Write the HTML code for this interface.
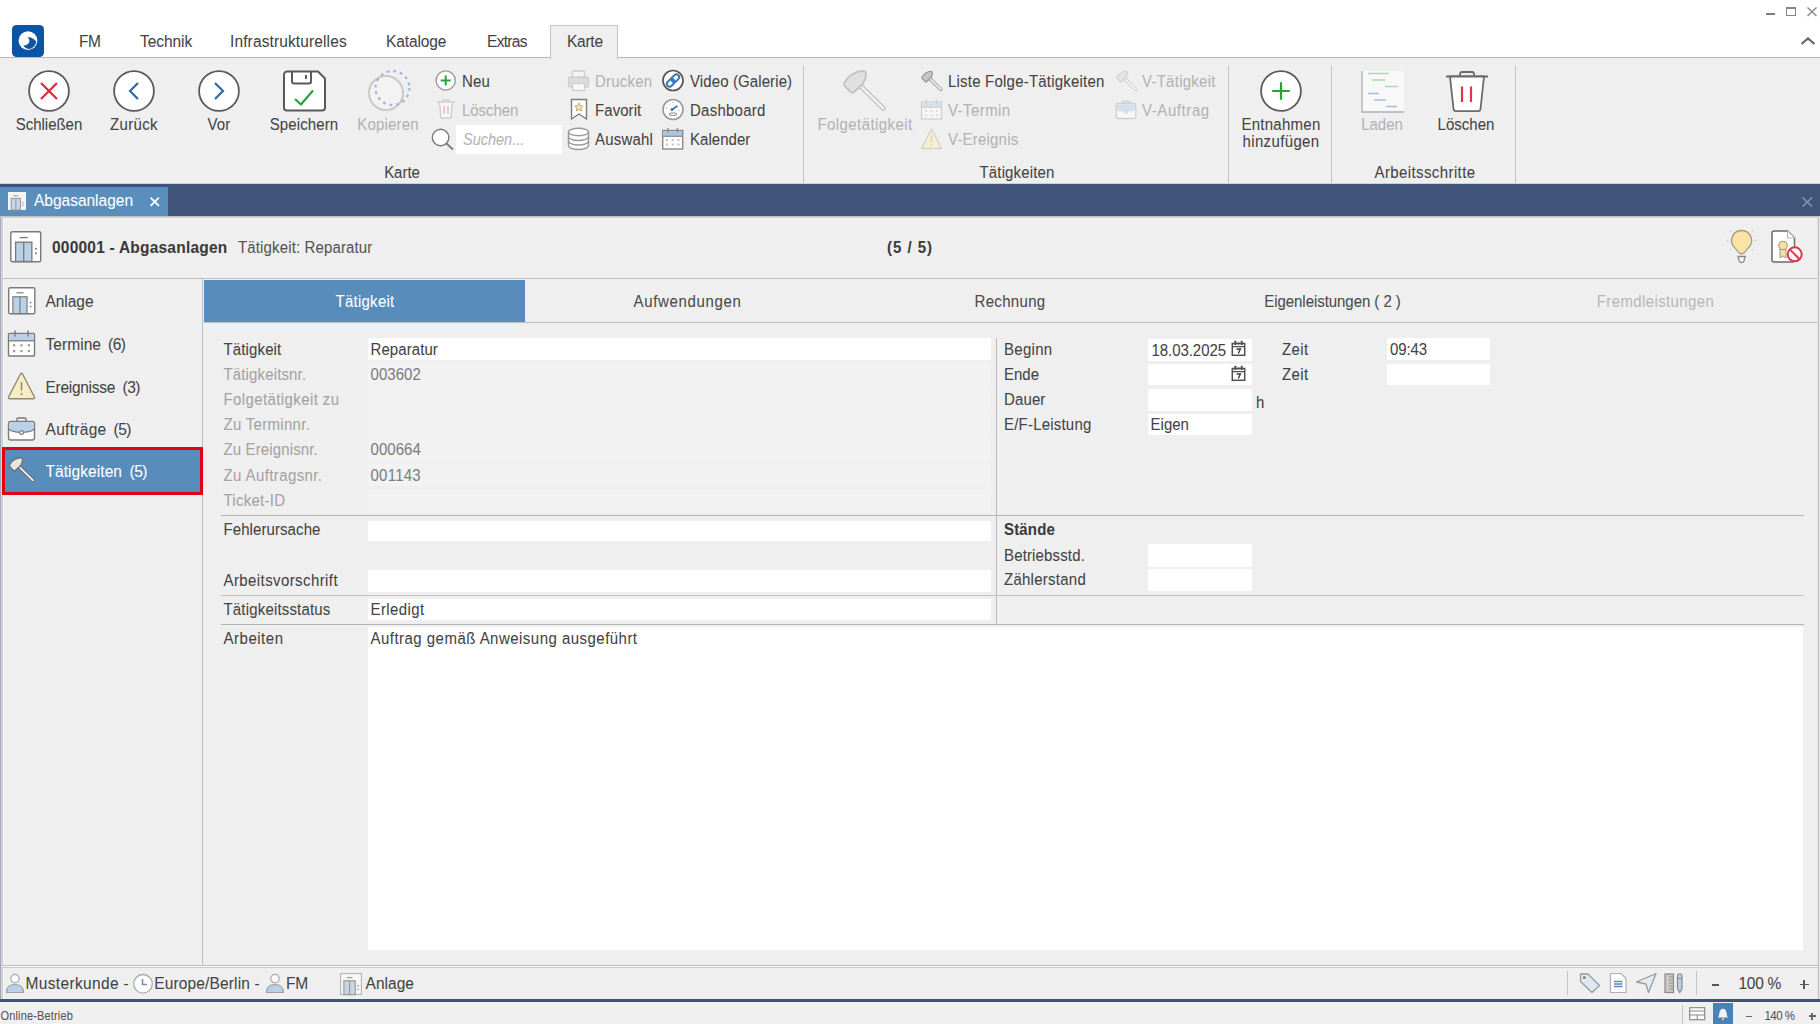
<!DOCTYPE html>
<html><head><meta charset="utf-8">
<style>
*{box-sizing:border-box;margin:0;padding:0}
html,body{width:1820px;height:1024px;overflow:hidden;background:#efefef}
body{font-family:"Liberation Sans",sans-serif;font-size:15px;color:#444;position:relative}
.a{position:absolute;white-space:nowrap}
.t{transform:scaleY(1.09);transform-origin:0 14.200px;position:absolute;white-space:nowrap;line-height:18px;height:18px;-webkit-text-stroke:0.06px currentColor}
.c{text-align:center}
.dis{color:#b3b3b3}
.lbl{color:#444}
.gl{color:#a3a3a3}
.w{background:#fff}
svg{position:absolute;overflow:visible}
.tb{font-size:15.5px;color:#444}
.big{transform:scaleY(1.09);transform-origin:0 14.200px;-webkit-text-stroke:0.06px currentColor;position:absolute;white-space:nowrap;line-height:18px;height:18px;width:120px;text-align:center}
.sb{font-size:15.500px;color:#444}
.tbt{font-size:15px;color:#4a4a4a}
.gv{color:#7d7d7d}
.st{font-size:15.500px;color:#444}
</style></head><body>
<!-- TOP WHITE -->
<div class="a w" style="left:0;top:0;width:1820px;height:57px"></div>
<div class="a" style="left:0;top:57px;width:1820px;height:1px;background:#b9b9b9"></div>
<!-- RIBBON BG -->
<div class="a" style="left:0;top:58px;width:1820px;height:126px;background:#efefef"></div>
<!-- BLUE BAR -->
<div class="a" style="left:0;top:183px;width:1820px;height:1px;background:#cdd1d8"></div>
<div class="a" style="left:0;top:184px;width:1820px;height:32px;background:#3f5478"></div>
<div class="a" style="left:0;top:186.500px;width:167.500px;height:29.500px;background:#5a8fbd"></div>
<!-- CONTENT FRAME -->
<div class="a" style="left:0;top:216px;width:1820px;height:784px;background:#efefef"></div>
<div class="a" style="left:0;top:216px;width:1px;height:784px;background:#a1a8b9"></div><div class="a" style="left:1px;top:216px;width:1px;height:784px;background:#d3d7db"></div><div class="a" style="left:2px;top:217px;width:1px;height:782px;background:#cdcfcb"></div><div class="a" style="left:3px;top:218px;width:1px;height:781px;background:#f5f6f0"></div>
<div class="a" style="left:1817px;top:217px;width:1px;height:782px;background:#e3e3e3"></div><div class="a" style="left:1818px;top:216px;width:1px;height:783px;background:#c4c4c4"></div><div class="a" style="left:1819px;top:216px;width:1px;height:783px;background:#e4e4e4"></div>
<div class="a" style="left:0;top:216px;width:1820px;height:1px;background:#c4c4c8"></div><div class="a" style="left:1px;top:217px;width:1818px;height:1px;background:#cfcfd2"></div><div class="a" style="left:3px;top:218px;width:1814px;height:1px;background:#f5f6f0"></div>
<!-- header line -->
<div class="a" style="left:3px;top:278px;width:1814px;height:1px;background:#bdbdbd"></div>
<!-- sidebar line -->
<div class="a" style="left:202px;top:279px;width:1px;height:685.500px;background:#bdbdbd"></div>
<!-- tabs -->
<div class="a" style="left:204px;top:280px;width:321px;height:42px;background:#588dbb"></div>
<div class="a" style="left:204px;top:322px;width:1613px;height:1px;background:#bdbdbd"></div>
<!-- status -->
<div class="a" style="left:2px;top:965px;width:1816px;height:1px;background:#bdbdbd"></div><div class="a" style="left:2px;top:966px;width:1816px;height:1px;background:#f8f8f8"></div><div class="a" style="left:2px;top:967px;width:1816px;height:1px;background:#c9c9c9"></div>
<div class="a" style="left:0;top:999.300px;width:1820px;height:2.500px;background:#3f5478;z-index:3"></div>

<!-- window controls -->
<div class="a" style="left:1766px;top:12.800px;width:9px;height:2px;background:#808080"></div>
<div class="a" style="left:1786px;top:7px;width:10px;height:9px;border:1px solid #858585;border-top:2.500px solid #858585"></div>
<svg style="left:1807px;top:6.800px" width="10" height="10"><path d="M0.5 0.5L9.5 9L9.5 9M9.5 0.5L0.5 9" stroke="#858585" stroke-width="1.3" fill="none"/></svg>
<svg style="left:1800px;top:36px" width="16" height="10"><path d="M1.5 8L8 2.5L14.5 8" stroke="#666" stroke-width="2.2" fill="none"/></svg>
<!-- logo -->
<div class="a" style="left:12px;top:24.500px;width:32px;height:32.500px;border-radius:4.500px;background:#0b55a4"></div>
<svg style="left:12px;top:25px" width="32" height="32"><circle cx="16" cy="15.700" r="9.400" fill="#fff"/><path d="M15.400 12.300C19 11.800 22 14 24.300 16.400A8.300 8.300 0 0 1 16.500 24C14 23.500 12.500 22 11.300 20.400C14.500 20.800 17.600 18.600 17.400 15.800C17.300 14 16.400 13 15.400 12.300Z" fill="#0b55a4"/></svg>
<!-- ribbon tabs -->
<div class="a" style="left:550px;top:25px;width:68px;height:34px;background:#efefef;border:1px solid #c4c4c4;border-bottom:none"></div>
<div class="t tb" style="letter-spacing:-0.445px;left:79px;top:33px">FM</div>
<div class="t tb" style="letter-spacing:-0.066px;left:140px;top:33px">Technik</div>
<div class="t tb" style="letter-spacing:0.123px;left:230px;top:33px">Infrastrukturelles</div>
<div class="t tb" style="letter-spacing:-0.100px;left:386px;top:33px">Kataloge</div>
<div class="t tb" style="letter-spacing:-0.690px;left:487px;top:33px">Extras</div>
<div class="t tb" style="letter-spacing:-0.253px;left:567px;top:33px">Karte</div>
<!--TOPROW-->

<!-- big buttons -->
<svg style="left:27px;top:69.200px" width="44" height="44"><circle cx="22" cy="22" r="19.900" fill="#fff" stroke="#5a5a5a" stroke-width="1.800"/><path d="M14 14L30 30M30 14L14 30" stroke="#e0283c" stroke-width="2.200" fill="none"/></svg>
<svg style="left:112px;top:69.200px" width="44" height="44"><circle cx="22" cy="22" r="19.900" fill="#fff" stroke="#5a5a5a" stroke-width="1.800"/><path d="M26 14L18 22L26 30" stroke="#2c6aa8" stroke-width="2.200" fill="none"/></svg>
<svg style="left:197px;top:69.200px" width="44" height="44"><circle cx="22" cy="22" r="19.900" fill="#fff" stroke="#5a5a5a" stroke-width="1.800"/><path d="M18 14L26 22L18 30" stroke="#2c6aa8" stroke-width="2.200" fill="none"/></svg>
<div class="big" style="letter-spacing:-0.023px;left:-11px;top:116px">Schließen</div>
<div class="big" style="letter-spacing:0.326px;left:74px;top:116px">Zurück</div>
<div class="big" style="letter-spacing:0.228px;left:159px;top:116px">Vor</div>
<div class="big" style="letter-spacing:0.106px;left:244px;top:116px">Speichern</div>
<div class="big dis" style="letter-spacing:0.157px;left:328px;top:116px">Kopieren</div>
<div class="big" style="letter-spacing:-0.032px;left:342px;top:164px">Karte</div>
<!-- group separators -->
<div class="a" style="left:803.300px;top:66px;width:1px;height:117px;background:#c3c3c3"></div>
<div class="a" style="left:1227.600px;top:66px;width:1px;height:117px;background:#c3c3c3"></div>
<div class="a" style="left:1330.700px;top:66px;width:1px;height:117px;background:#c3c3c3"></div>
<div class="a" style="left:1515.400px;top:66px;width:1px;height:117px;background:#c3c3c3"></div>

<!-- Speichern icon -->
<svg style="left:282px;top:69px" width="46" height="44"><path d="M5 2.500H36L43 9.500V38.500a3 3 0 0 1-3 3H5a3 3 0 0 1-3-3V5.500a3 3 0 0 1 3-3z" fill="#fff" stroke="#5a5a5a" stroke-width="2"/><path d="M10 2.500V12.500a2 2 0 0 0 2 2H27a2 2 0 0 0 2-2V2.500" fill="none" stroke="#5a5a5a" stroke-width="2"/><path d="M24 6V10" stroke="#5a5a5a" stroke-width="2"/><path d="M13 30L19 35.500L31 21.500" fill="none" stroke="#27a237" stroke-width="2.200"/></svg>
<!-- Kopieren icon -->
<svg style="left:366px;top:68px" width="48" height="46"><circle cx="20" cy="25" r="17" fill="#f3f3f3" stroke="#c9c9c9" stroke-width="2"/><circle cx="26.500" cy="20" r="17" fill="none" stroke="#a3bad4" stroke-width="2.300" stroke-dasharray="2.800 3.900"/></svg>
<!-- small col 1 -->
<svg style="left:435px;top:70px" width="22" height="22"><circle cx="10.700" cy="10.500" r="9.600" fill="#fff" stroke="#9b9b9b" stroke-width="1.400"/><path d="M10.700 5.500V15.500M5.700 10.500H15.700" stroke="#2ea043" stroke-width="2"/></svg>
<div class="t" style="letter-spacing:0.190px;left:462px;top:72.6px">Neu</div>
<svg style="left:436px;top:97.700px" width="20" height="22"><path d="M1 4H19M7 4V2H13V4M3.500 4L5 20H15L16.500 4" fill="#f7f7f7" stroke="#cfcfcf" stroke-width="1.400"/><path d="M8 8V16M12 8V16" stroke="#f0b8bd" stroke-width="1.500"/></svg>
<div class="t dis" style="letter-spacing:-0.060px;left:462px;top:102.2px">Löschen</div>
<svg style="left:430px;top:127px" width="26" height="26"><circle cx="10.600" cy="10.500" r="8.300" fill="#fff" stroke="#7a7a7a" stroke-width="1.400"/><path d="M16.500 16.500L23 22.500" stroke="#7a7a7a" stroke-width="1.800"/></svg>
<div class="a w" style="left:456px;top:125px;width:106px;height:29px"></div>
<div class="t" style="left:463px;top:130.8px;font-style:italic;color:#b4b4b4;font-size:14.500px">Suchen...</div>
<!-- small col 2 -->
<svg style="left:567px;top:69px" width="24" height="24"><path d="M5.500 8V2H17.500V8" fill="#f4f4f4" stroke="#cdcdcd" stroke-width="1.300"/><rect x="1.500" y="8" width="20" height="10" rx="1.500" fill="#dcdcdc" stroke="#cdcdcd" stroke-width="1.300"/><rect x="5.500" y="14.500" width="12" height="7" fill="#f7f7f7" stroke="#cdcdcd" stroke-width="1.300"/></svg>
<div class="t dis" style="letter-spacing:0.206px;left:595px;top:72.6px">Drucken</div>
<svg style="left:570px;top:98px" width="18" height="23"><path d="M1.500 1.500H16.500V21L9 16L1.500 21Z" fill="#fff" stroke="#7d7d7d" stroke-width="1.400"/><path d="M9 5l1.300 2.700l2.900 0.400l-2.100 2l0.500 2.900L9 11.600L6.400 13l0.500-2.900l-2.100-2l2.900-0.400z" fill="#f5e2a6" stroke="#b9a377" stroke-width="0.900"/></svg>
<div class="t" style="letter-spacing:0.065px;left:595px;top:102.2px">Favorit</div>
<svg style="left:567px;top:127px" width="24" height="24"><path d="M1.500 5V18.500C1.500 20.700 6 22.500 11.500 22.500S21.500 20.700 21.500 18.500V5" fill="#fff" stroke="#9a9a9a" stroke-width="1.400"/><ellipse cx="11.500" cy="5" rx="10" ry="3.700" fill="#fff" stroke="#9a9a9a" stroke-width="1.400"/><path d="M1.500 9.500C1.500 11.700 6 13.500 11.500 13.500S21.500 11.700 21.500 9.500M1.500 14C1.500 16.200 6 18 11.500 18S21.500 16.200 21.500 14" fill="none" stroke="#9a9a9a" stroke-width="1.400"/></svg>
<div class="t" style="letter-spacing:0.185px;left:595px;top:130.8px">Auswahl</div>
<!-- small col 3 -->
<svg style="left:662px;top:69px" width="24" height="24"><circle cx="11" cy="11.500" r="10" fill="#fff" stroke="#555" stroke-width="1.700"/><g transform="rotate(-45 11 11.500)" fill="none" stroke="#3a78b8" stroke-width="2"><rect x="3.500" y="8.700" width="8.500" height="5.600" rx="2.800"/><rect x="10" y="8.700" width="8.500" height="5.600" rx="2.800"/></g></svg>
<div class="t" style="letter-spacing:0.106px;left:690px;top:72.6px">Video (Galerie)</div>
<svg style="left:662px;top:98px" width="24" height="24"><circle cx="11" cy="11.500" r="10" fill="#fff" stroke="#9a9a9a" stroke-width="1.600"/><path d="M10 11.500L15.500 8" stroke="#3a78b8" stroke-width="2"/><circle cx="10" cy="11.500" r="1.500" fill="#3a78b8"/><ellipse cx="11" cy="16.200" rx="3.600" ry="1.300" fill="none" stroke="#9a9a9a" stroke-width="1.100"/><path d="M4 9.500l1.200 0.500M6.500 5.800l0.800 0.900M11 4v1.200M17.500 12.500h-1.200" stroke="#b5b5b5" stroke-width="1"/></svg>
<div class="t" style="letter-spacing:0.245px;left:690px;top:102.2px">Dashboard</div>
<svg style="left:661px;top:127px" width="24" height="24"><rect x="1.700" y="3.500" width="20" height="18.500" fill="#fff" stroke="#8a8a8a" stroke-width="1.400"/><rect x="2.400" y="4.200" width="18.600" height="4.800" fill="#a9c5e0"/><path d="M1.700 9.300H21.700" stroke="#8a8a8a" stroke-width="1.200"/><path d="M7 1V5.500M16.500 1V5.500" stroke="#8a8a8a" stroke-width="1.400"/><g fill="#bdbdbd"><rect x="5" y="12" width="2" height="2"/><rect x="10.700" y="12" width="2" height="2"/><rect x="16.400" y="12" width="2" height="2"/><rect x="5" y="16.500" width="2" height="2"/><rect x="10.700" y="16.500" width="2" height="2"/><rect x="16.400" y="16.500" width="2" height="2"/></g></svg>
<div class="t" style="letter-spacing:0.044px;left:690px;top:130.8px">Kalender</div>
<!-- Folgetätigkeit -->
<svg style="left:840px;top:68px" width="48" height="44"><g transform="scale(1)"><path d="M21 18.500L43.500 40.500" stroke="#c2c2c2" stroke-width="4.8" stroke-linecap="round"/><path d="M21 18.500L43.500 40.500" stroke="#f5f5f5" stroke-width="2.3" stroke-linecap="round"/><path d="M4.500 14.500C6.500 11 9 8 12.300 6.200C15.500 4.200 19 3 22.800 3C25 3 26.200 4.300 26 6.200C25.700 9.500 24.800 12.500 23.200 15.500L14 24Q12.300 25.500 10.800 24L4.300 17.500Q3.300 16.200 4.500 14.500Z" fill="#e0e0e0" stroke="#c2c2c2" stroke-width="1.8" stroke-linejoin="round"/></g></svg>
<div class="big dis" style="letter-spacing:0.427px;left:805px;top:116px">Folgetätigkeit</div>
<!-- Tätigkeiten small -->
<svg style="left:919.7px;top:70px" width="23" height="21"><g transform="scale(0.48)"><path d="M21 18.500L43.500 40.500" stroke="#a6a6a6" stroke-width="7.500000000000001" stroke-linecap="round"/><path d="M21 18.500L43.500 40.500" stroke="#eeeeee" stroke-width="3.3333333333333335" stroke-linecap="round"/><path d="M4.500 14.500C6.500 11 9 8 12.300 6.200C15.500 4.200 19 3 22.800 3C25 3 26.200 4.300 26 6.200C25.700 9.500 24.800 12.500 23.200 15.500L14 24Q12.300 25.500 10.800 24L4.300 17.500Q3.300 16.200 4.500 14.500Z" fill="#c6c6c6" stroke="#9a9a9a" stroke-width="2.7083333333333335" stroke-linejoin="round"/></g></svg>
<div class="t" style="letter-spacing:0.211px;left:948px;top:72.6px">Liste Folge-Tätigkeiten</div>
<svg style="left:920px;top:98px" width="24" height="24"><rect x="1.500" y="4" width="20" height="17" fill="#f6f6f6" stroke="#cfcfcf" stroke-width="1.300"/><rect x="2.200" y="4.700" width="18.600" height="4.300" fill="#d4e0ec"/><path d="M1.500 9.300H21.500" stroke="#cfcfcf" stroke-width="1.100"/><path d="M6.500 1.500V6M16.500 1.500V6" stroke="#cfcfcf" stroke-width="1.300"/><g fill="#dcdcdc"><rect x="5" y="12" width="2" height="2"/><rect x="10.500" y="12" width="2" height="2"/><rect x="16" y="12" width="2" height="2"/><rect x="5" y="16.300" width="2" height="2"/><rect x="10.500" y="16.300" width="2" height="2"/><rect x="16" y="16.300" width="2" height="2"/></g></svg>
<div class="t dis" style="letter-spacing:0.427px;left:948px;top:102.2px">V-Termin</div>
<svg style="left:920px;top:127px" width="24" height="24"><path d="M11.500 2L21.500 21.500H1.500Z" fill="#f6efd2" stroke="#d4d1c6" stroke-width="1.300" stroke-linejoin="round"/><path d="M11.500 8.500V15" stroke="#d4d1c6" stroke-width="1.300"/><circle cx="11.500" cy="18" r="0.900" fill="#d4d1c6"/></svg>
<div class="t dis" style="letter-spacing:0.203px;left:948px;top:130.8px">V-Ereignis</div>
<svg style="left:1114.7px;top:70px" width="23" height="21"><g transform="scale(0.48)"><path d="M21 18.500L43.500 40.500" stroke="#d2d2d2" stroke-width="7.500000000000001" stroke-linecap="round"/><path d="M21 18.500L43.500 40.500" stroke="#f3f3f3" stroke-width="3.3333333333333335" stroke-linecap="round"/><path d="M4.500 14.500C6.500 11 9 8 12.300 6.200C15.500 4.200 19 3 22.800 3C25 3 26.200 4.300 26 6.200C25.700 9.500 24.800 12.500 23.200 15.500L14 24Q12.300 25.500 10.800 24L4.300 17.500Q3.300 16.200 4.500 14.500Z" fill="#e4e4e4" stroke="#d2d2d2" stroke-width="2.7083333333333335" stroke-linejoin="round"/></g></svg>
<div class="t dis" style="letter-spacing:0.257px;left:1142px;top:72.6px">V-Tätigkeit</div>
<svg style="left:1115px;top:99px" width="24" height="22"><path d="M7.500 4.500V2.500H14.500V4.500" fill="none" stroke="#cfcfcf" stroke-width="1.300"/><rect x="1.200" y="4.500" width="19.600" height="15" rx="1.800" fill="#f7f7f7" stroke="#cfcfcf" stroke-width="1.300"/><path d="M1.800 5.200H20.200V10C20.200 12 15 13 11 13S1.800 12 1.800 10Z" fill="#d4e0ec"/><circle cx="11" cy="13" r="1.500" fill="#f7f7f7" stroke="#cfcfcf" stroke-width="1"/></svg>
<div class="t dis" style="letter-spacing:0.584px;left:1142px;top:102.2px">V-Auftrag</div>
<div class="big" style="letter-spacing:0.139px;left:957px;top:164px">Tätigkeiten</div>
<!-- Entnahmen -->
<svg style="left:1259px;top:69.200px" width="44" height="44"><circle cx="22" cy="22" r="19.900" fill="#fff" stroke="#5a5a5a" stroke-width="1.800"/><path d="M22 13.200V30.800M13.200 22H30.800" stroke="#27a237" stroke-width="2.200"/></svg>
<div class="big" style="letter-spacing:0.263px;left:1221px;top:115.500px">Entnahmen</div><div class="big" style="letter-spacing:0.359px;left:1221px;top:132.800px">hinzufügen</div>
<!-- Laden -->
<svg style="left:1359.600px;top:69.600px" width="46" height="44"><rect x="2" y="1" width="42" height="41" fill="#f8f8f8"/><path d="M2 1V42H44" fill="none" stroke="#b0b0b0" stroke-width="1.300"/><path d="M8 3.500H29M12 10H25M25 16.500H38" stroke="#a6dcae" stroke-width="1.600"/><path d="M8 23.500H19M14 30H26M26 36.500H37" stroke="#a3bfdc" stroke-width="1.600"/></svg>
<div class="big dis" style="letter-spacing:-0.004px;left:1322px;top:116px">Laden</div>
<!-- Löschen big -->
<svg style="left:1444px;top:70px" width="46" height="44"><path d="M2 6.500H44" stroke="#6a6a6a" stroke-width="2"/><path d="M16 6.500V4a2 2 0 0 1 2-2H28a2 2 0 0 1 2 2V6.500" fill="none" stroke="#6a6a6a" stroke-width="1.800"/><path d="M6 6.500L9.500 39a2.500 2.500 0 0 0 2.500 2.200H34a2.500 2.500 0 0 0 2.500-2.200L40 6.500Z" fill="#fff" stroke="#6a6a6a" stroke-width="1.800"/><path d="M18 16.500V32M27 16.500V32" stroke="#e5334a" stroke-width="2.200"/></svg>
<div class="big" style="letter-spacing:0.026px;left:1406px;top:116px">Löschen</div>
<div class="big" style="letter-spacing:0.397px;left:1365px;top:164px">Arbeitsschritte</div>
<!--RIBBON-->

<svg style="left:7.500px;top:192px" width="18" height="18" viewBox="0 0 31 31"><rect x="0" y="0" width="31" height="31" fill="#f4f4f4"/><path d="M9.500 6.500H17.500" stroke="#9a9a9a" stroke-width="1.800"/><rect x="5.500" y="11" width="16" height="20" fill="#c6d6e6" stroke="#9a9a9a" stroke-width="1.800"/><path d="M13.500 11V31" stroke="#9a9a9a" stroke-width="1.800"/><circle cx="25.500" cy="18" r="1.300" fill="#9a9a9a"/><circle cx="25.500" cy="23" r="1.300" fill="#9a9a9a"/></svg>
<div class="t" style="letter-spacing:-0.010px;left:34px;top:192px;color:#fff;font-size:15.500px">Abgasanlagen</div>
<svg style="left:150px;top:196.700px" width="10" height="10"><path d="M0.600 0.600L8.900 8.900M8.900 0.600L0.600 8.900" stroke="#fff" stroke-width="1.800"/></svg>
<svg style="left:1801.500px;top:196.500px" width="11" height="10"><path d="M0.500 0.500L10 9.500M10 0.500L0.500 9.500" stroke="#8a97b0" stroke-width="1.500"/></svg>
<!--BLUEBAR-->
<svg style="left:10px;top:230.5px" width="31.5" height="31.5" viewBox="0 0 31 31"><rect x="0.800" y="0.800" width="29.400" height="29.400" rx="1.500" fill="#fff" stroke="#7a7a7a" stroke-width="1.4"/><path d="M9.500 6.500H17.500" stroke="#7a7a7a" stroke-width="1.300"/><rect x="5.500" y="11" width="16" height="19" fill="#b9d0e6" stroke="#7a7a7a" stroke-width="1.300"/><path d="M13.500 11V30" stroke="#7a7a7a" stroke-width="1.300"/><circle cx="25.500" cy="17.500" r="1" fill="#7a7a7a"/><circle cx="25.500" cy="22" r="1" fill="#7a7a7a"/></svg>
<div class="t" style="letter-spacing:0.220px;left:52px;top:239px;font-weight:bold;color:#3a3a3a;font-size:15.500px">000001 - Abgasanlagen</div>
<div class="t" style="letter-spacing:0.138px;left:238px;top:239px;color:#555">Tätigkeit: Reparatur</div>
<div class="t" style="letter-spacing:0.973px;left:887px;top:239px;font-weight:bold;color:#3a3a3a">(5 / 5)</div>
<!-- bulb -->
<svg style="left:1726px;top:228px" width="32" height="37"><path d="M15.600 2.500a10 10 0 0 1 6.500 17.600c-1.800 1.700-2.800 2.900-3.300 4.300l-3.200 1.600l-3.200-1.600c-0.500-1.400-1.500-2.600-3.300-4.300a10 10 0 0 1 6.500-17.600z" fill="#fbe3a8" stroke="#a89880" stroke-width="1.300"/><path d="M12 28.500h7.200l-1.200 4.500a2.600 2.600 0 0 1-4.800 0z" fill="#f4f4f4" stroke="#8a8a8a" stroke-width="1.300"/><g fill="#c9c9c9"><circle cx="1.700" cy="12.500" r="0.900"/><circle cx="29.500" cy="12.500" r="0.900"/><circle cx="4.800" cy="3.300" r="0.800"/><circle cx="26.400" cy="3.300" r="0.800"/><circle cx="4.800" cy="21.700" r="0.800"/><circle cx="26.400" cy="21.700" r="0.800"/></g></svg>
<!-- doc -->
<svg style="left:1770px;top:229px" width="36" height="36"><path d="M4 2H17.500L24.500 9V31a2 2 0 0 1-2 2H4a2 2 0 0 1-2-2V4a2 2 0 0 1 2-2z" fill="#fff" stroke="#6a6a6a" stroke-width="1.500"/><path d="M17.500 2V9H24.500" fill="#fff" stroke="#b5b5b5" stroke-width="1.200"/><path d="M10 20v9l3-2l3 2v-9z" fill="#f5dfa5" stroke="#a89880" stroke-width="1"/><circle cx="13" cy="16.500" r="4.300" fill="#f5dfa5" stroke="#a89880" stroke-width="1.100"/><circle cx="24.700" cy="25.300" r="7" fill="#fff" stroke="#e0344a" stroke-width="2"/><path d="M19.800 20.400L29.600 30.200" stroke="#e0344a" stroke-width="2"/></svg>
<!--HEADER-->
<svg style="left:8px;top:287px" width="27.5" height="27.5" viewBox="0 0 31 31"><rect x="0.800" y="0.800" width="29.400" height="29.400" rx="1.500" fill="#fff" stroke="#7a7a7a" stroke-width="1.5781818181818181"/><path d="M9.500 6.500H17.500" stroke="#7a7a7a" stroke-width="1.300"/><rect x="5.500" y="11" width="16" height="19" fill="#b9d0e6" stroke="#7a7a7a" stroke-width="1.300"/><path d="M13.500 11V30" stroke="#7a7a7a" stroke-width="1.300"/><circle cx="25.500" cy="17.500" r="1" fill="#7a7a7a"/><circle cx="25.500" cy="22" r="1" fill="#7a7a7a"/></svg>
<div class="t sb" style="letter-spacing:-0.044px;left:45.500px;top:293px">Anlage</div>
<svg style="left:7px;top:329px" width="30" height="29"><rect x="1.500" y="4.500" width="26" height="22.500" rx="1" fill="#fff" stroke="#7a7a7a" stroke-width="1.400"/><rect x="2.200" y="5.200" width="24.600" height="6.300" fill="#b9d0e6"/><path d="M1.500 11.800H27.500" stroke="#7a7a7a" stroke-width="1.300"/><path d="M8 1.500V7.500M21 1.500V7.500" stroke="#7a7a7a" stroke-width="1.400"/><g fill="#9a9a9a"><rect x="6" y="15.200" width="2.200" height="2.200"/><rect x="13.400" y="15.200" width="2.200" height="2.200"/><rect x="20.800" y="15.200" width="2.200" height="2.200"/><rect x="6" y="21" width="2.200" height="2.200"/><rect x="13.400" y="21" width="2.200" height="2.200"/><rect x="20.800" y="21" width="2.200" height="2.200"/></g></svg>
<div class="t sb" style="letter-spacing:0.051px;left:45.500px;top:335.500px">Termine</div><div class="t sb" style="letter-spacing:-0.484px;left:108px;top:335.500px">(6)</div>
<svg style="left:7px;top:371px" width="30" height="30"><path d="M13.300 3.300Q14.500 1.200 15.700 3.300L27.300 25.700Q28.200 27.700 26.200 27.700H2.800Q0.800 27.700 1.700 25.700Z" fill="#f7ecc4" stroke="#8e8a7d" stroke-width="1.400" stroke-linejoin="round"/><path d="M14.500 11V19.500" stroke="#8e8a7d" stroke-width="1.500"/><circle cx="14.500" cy="23" r="1.100" fill="#8e8a7d"/></svg>
<div class="t sb" style="letter-spacing:-0.287px;left:45.500px;top:378.500px">Ereignisse</div><div class="t sb" style="letter-spacing:-0.484px;left:122.500px;top:378.500px">(3)</div>
<svg style="left:7px;top:416px" width="30" height="26"><path d="M10 5.500V3a1 1 0 0 1 1-1H18a1 1 0 0 1 1 1V5.500" fill="none" stroke="#7a7a7a" stroke-width="1.400"/><rect x="1.500" y="5.500" width="26" height="18.500" rx="2.300" fill="#fff" stroke="#7a7a7a" stroke-width="1.400"/><path d="M2.200 6.200H26.800V12.500C26.800 15 20 16.500 14.500 16.500S2.200 15 2.200 12.500Z" fill="#b9d0e6"/><path d="M2 12.500C2 15 9 16.500 14.500 16.500S27 15 27 12.500" fill="none" stroke="#7a7a7a" stroke-width="1.200"/><circle cx="14.500" cy="16.500" r="1.900" fill="#fff" stroke="#7a7a7a" stroke-width="1.200"/></svg>
<div class="t sb" style="letter-spacing:0.299px;left:45.500px;top:420.500px">Aufträge</div><div class="t sb" style="letter-spacing:-0.484px;left:113.500px;top:420.500px">(5)</div>
<div class="a" style="left:2px;top:447.300px;width:200.500px;height:47.700px;background:#588dbb;border:3px solid #e5000f"></div>
<svg style="left:6.8px;top:456.1px" width="29" height="26"><g transform="scale(0.6)"><path d="M21 18.500L43.500 40.500" stroke="#6a6a6a" stroke-width="6.0" stroke-linecap="round"/><path d="M21 18.500L43.500 40.500" stroke="#f6f4ef" stroke-width="2.8333333333333335" stroke-linecap="round"/><path d="M4.500 14.500C6.500 11 9 8 12.300 6.200C15.500 4.200 19 3 22.800 3C25 3 26.200 4.300 26 6.200C25.700 9.500 24.800 12.500 23.200 15.500L14 24Q12.300 25.500 10.800 24L4.300 17.500Q3.300 16.200 4.500 14.500Z" fill="#e6e6e6" stroke="#6f6f6f" stroke-width="2.3333333333333335" stroke-linejoin="round"/></g></svg>
<div class="t sb" style="letter-spacing:0.061px;left:45.500px;top:462.500px;color:#fff">Tätigkeiten</div><div class="t sb" style="letter-spacing:-0.484px;left:129.500px;top:462.500px;color:#fff">(5)</div>
<!--SIDEBAR-->

<div class="t c tbt" style="left:204px;width:322px;top:292.700px;color:#fff"><span style="letter-spacing:0.255px">Tätigkeit</span></div>
<div class="t c tbt" style="left:526px;width:323px;top:292.700px"><span style="letter-spacing:0.659px">Aufwendungen</span></div>
<div class="t c tbt" style="left:849px;width:322px;top:292.700px"><span style="letter-spacing:0.326px">Rechnung</span></div>
<div class="t c tbt" style="left:1171px;width:323px;top:292.700px"><span style="letter-spacing:-0.052px">Eigenleistungen ( 2 )</span></div>
<div class="t c tbt" style="left:1494px;width:323px;top:292.700px;color:#b9b9b9"><span style="letter-spacing:0.384px">Fremdleistungen</span></div>
<!--TABS-->
<div class="a w" style="left:367.500px;top:338px;width:623px;height:22.300px"></div>
<div class="a" style="left:367.500px;top:363.0px;width:623px;height:22.500px;background:#f2f2f2"></div>
<div class="a" style="left:367.500px;top:388.3px;width:623px;height:22.500px;background:#f2f2f2"></div>
<div class="a" style="left:367.500px;top:413.3px;width:623px;height:22.500px;background:#f2f2f2"></div>
<div class="a" style="left:367.500px;top:438.5px;width:623px;height:22.500px;background:#f2f2f2"></div>
<div class="a" style="left:367.500px;top:463.8px;width:623px;height:22.500px;background:#f2f2f2"></div>
<div class="a" style="left:367.500px;top:489.0px;width:623px;height:22.500px;background:#f2f2f2"></div>
<div class="t lbl" style="letter-spacing:0.133px;left:223.5px;top:340.8px">Tätigkeit</div><div class="t lbl" style="letter-spacing:0.077px;left:370.5px;top:340.8px">Reparatur</div>
<div class="t gl" style="letter-spacing:0.140px;left:223.5px;top:365.8px">Tätigkeitsnr.</div><div class="t gv" style="letter-spacing:0.056px;left:370.5px;top:365.8px">003602</div>
<div class="t gl" style="letter-spacing:0.392px;left:223.5px;top:391.1px">Folgetätigkeit zu</div>
<div class="t gl" style="letter-spacing:0.292px;left:223.5px;top:416.1px">Zu Terminnr.</div>
<div class="t gl" style="letter-spacing:0.132px;left:223.5px;top:441.3px">Zu Ereignisnr.</div><div class="t gv" style="letter-spacing:0.056px;left:370.5px;top:441.3px">000664</div>
<div class="t gl" style="letter-spacing:0.394px;left:223.5px;top:466.6px">Zu Auftragsnr.</div><div class="t gv" style="letter-spacing:0.241px;left:370.5px;top:466.6px">001143</div>
<div class="t gl" style="letter-spacing:0.261px;left:223.5px;top:491.8px">Ticket-ID</div>
<div class="a" style="left:995.500px;top:338px;width:1.200px;height:285.500px;background:#b9b9b9"></div>
<div class="a" style="left:220.500px;top:514.500px;width:1583px;height:1px;background:#b4b4b4"></div>
<div class="a" style="left:220.500px;top:594.500px;width:1583px;height:1px;background:#c2c2c2"></div>
<div class="a" style="left:220.500px;top:623.500px;width:1583px;height:1px;background:#b4b4b4"></div>
<div class="a w" style="left:367.500px;top:520.500px;width:623px;height:20.500px"></div>
<div class="t lbl" style="letter-spacing:0.085px;left:223.5px;top:521.2px">Fehlerursache</div>
<div class="a w" style="left:367.500px;top:570px;width:623px;height:21.500px"></div>
<div class="t lbl" style="letter-spacing:0.410px;left:223.5px;top:571.6px">Arbeitsvorschrift</div>
<div class="a w" style="left:367.500px;top:598.500px;width:623px;height:21.500px"></div>
<div class="t lbl" style="letter-spacing:0.174px;left:223.5px;top:600.8px">Tätigkeitsstatus</div>
<div class="t lbl" style="letter-spacing:0.393px;left:370.5px;top:600.8px">Erledigt</div>
<div class="a w" style="left:367.500px;top:627px;width:1435.500px;height:322.500px"></div>
<div class="t lbl" style="letter-spacing:0.516px;left:223.5px;top:630.2px">Arbeiten</div>
<div class="t lbl" style="letter-spacing:0.471px;left:370.5px;top:630.2px">Auftrag gemäß Anweisung ausgeführt</div>
<div class="a w" style="left:1147.700px;top:338.500px;width:104px;height:22px"></div>
<div class="a w" style="left:1147.700px;top:363.800px;width:104px;height:21px"></div>
<div class="a w" style="left:1147.700px;top:388.500px;width:104px;height:22.500px"></div>
<div class="a w" style="left:1147.700px;top:413.700px;width:104px;height:21.800px"></div>
<div class="a w" style="left:1386.800px;top:338.200px;width:103.700px;height:22px"></div>
<div class="a w" style="left:1386.800px;top:363.800px;width:103.700px;height:21px"></div>
<div class="t lbl" style="letter-spacing:0.297px;left:1004px;top:340.8px">Beginn</div>
<div class="t lbl" style="letter-spacing:-0.012px;left:1004px;top:365.8px">Ende</div>
<div class="t lbl" style="letter-spacing:0.128px;left:1004px;top:391.1px">Dauer</div>
<div class="t lbl" style="letter-spacing:0.204px;left:1004px;top:415.6px">E/F-Leistung</div>
<div class="t lbl" style="letter-spacing:-0.058px;left:1151.500px;top:341.5px">18.03.2025</div>
<div class="t lbl" style="letter-spacing:0.025px;left:1150.500px;top:415.6px">Eigen</div>
<div class="t lbl" style="left:1256px;top:394.4px">h</div>
<div class="t lbl" style="letter-spacing:0.371px;left:1282px;top:340.8px">Zeit</div>
<div class="t lbl" style="letter-spacing:0.371px;left:1282px;top:365.8px">Zeit</div>
<div class="t lbl" style="letter-spacing:-0.109px;left:1390px;top:340.8px">09:43</div>
<svg style="left:1231px;top:340px" width="16" height="17"><rect x="1.300" y="3.500" width="12.400" height="11.800" fill="#fff" stroke="#505050" stroke-width="1.500"/><path d="M1.300 6.600H13.700" stroke="#505050" stroke-width="1.300"/><path d="M4.300 0.700V5M10.700 0.700V5" stroke="#505050" stroke-width="2"/><path d="M5.600 9H9.400L7.300 13.500" fill="none" stroke="#3a3a3a" stroke-width="1.400"/><rect x="6.700" y="2.400" width="1.600" height="2.200" fill="#505050"/></svg>
<svg style="left:1231px;top:365.2px" width="16" height="17"><rect x="1.300" y="3.500" width="12.400" height="11.800" fill="#fff" stroke="#505050" stroke-width="1.500"/><path d="M1.300 6.600H13.700" stroke="#505050" stroke-width="1.300"/><path d="M4.300 0.700V5M10.700 0.700V5" stroke="#505050" stroke-width="2"/><path d="M5.600 9H9.400L7.300 13.500" fill="none" stroke="#3a3a3a" stroke-width="1.400"/><rect x="6.700" y="2.400" width="1.600" height="2.200" fill="#505050"/></svg>
<div class="t" style="letter-spacing:0.164px;left:1004px;top:520.8px;font-weight:bold;color:#3a3a3a">Stände</div>
<div class="t lbl" style="letter-spacing:0.148px;left:1004px;top:547.2px">Betriebsstd.</div>
<div class="t lbl" style="letter-spacing:0.253px;left:1004px;top:571.1px">Zählerstand</div>
<div class="a w" style="left:1147.700px;top:543.800px;width:104px;height:23.200px"></div>
<div class="a w" style="left:1147.700px;top:569.200px;width:104px;height:22.200px"></div>
<!--FORM-->

<svg style="left:5px;top:972px" width="22" height="22"><path d="M1.500 20.500C1.500 15 5 12.500 10 12.500S18.500 15 18.500 20.500Z" fill="#b9d0e6" stroke="#a0a0a0" stroke-width="1.200"/><circle cx="10" cy="6.600" r="4.200" fill="#fff" stroke="#a8a8a8" stroke-width="1.200"/></svg>
<div class="t st" style="letter-spacing:0.340px;left:25.500px;top:975.300px">Musterkunde -</div>
<svg style="left:132px;top:973px" width="22" height="22"><circle cx="11" cy="10.800" r="9.300" fill="#fff" stroke="#aaaaaa" stroke-width="1.300"/><path d="M10.500 6V11.500H15" fill="none" stroke="#6f94c4" stroke-width="1.600"/></svg>
<div class="t st" style="letter-spacing:0.141px;left:154.300px;top:975.300px">Europe/Berlin -</div>
<svg style="left:265px;top:972px" width="22" height="22"><path d="M1.500 20.500C1.500 15 5 12.500 10 12.500S18.500 15 18.500 20.500Z" fill="#b9d0e6" stroke="#a0a0a0" stroke-width="1.200"/><circle cx="10" cy="6.600" r="4.200" fill="#fff" stroke="#a8a8a8" stroke-width="1.200"/></svg>
<div class="t st" style="letter-spacing:-0.195px;left:286px;top:975.300px">FM</div>
<svg style="left:339.500px;top:972.500px" width="22" height="22" viewBox="0 0 31 31"><rect x="0.800" y="0.800" width="29.400" height="29.400" fill="#f7f7f7" stroke="#b5b5b5" stroke-width="1.600"/><path d="M9.500 6.500H17.500" stroke="#9a9a9a" stroke-width="1.700"/><rect x="5.500" y="11" width="16" height="19.500" fill="#c6d6e6" stroke="#9a9a9a" stroke-width="1.700"/><path d="M13.500 11V30" stroke="#9a9a9a" stroke-width="1.700"/><circle cx="25.500" cy="18" r="1.200" fill="#9a9a9a"/><circle cx="25.500" cy="23" r="1.200" fill="#9a9a9a"/></svg>
<div class="t st" style="letter-spacing:0.039px;left:365.500px;top:975.300px">Anlage</div>
<div class="a" style="left:1567px;top:970.500px;width:1px;height:24px;background:#c3c3c3"></div>
<div class="a" style="left:1695.500px;top:970.500px;width:1px;height:24px;background:#c3c3c3"></div>
<!-- tag -->
<svg style="left:1579px;top:972px" width="23" height="22"><path d="M1.500 2H9L20.500 13.500L13 20.500L1.500 9.500Z" fill="#dfe7f0" stroke="#9a9a9a" stroke-width="1.300" stroke-linejoin="round"/><circle cx="5.300" cy="5.700" r="1.400" fill="#777"/></svg>
<!-- doc -->
<svg style="left:1609px;top:972px" width="19" height="22"><path d="M1.500 1.500H12L17 6.500V20.500H1.500Z" fill="#fff" stroke="#b0b0b0" stroke-width="1.200"/><path d="M5 9.500H13.500M5 12H13.500M5 14.500H13.500" stroke="#5a8fbd" stroke-width="1.500"/></svg>
<!-- arrow -->
<svg style="left:1635px;top:972px" width="23" height="22"><path d="M21 1.500L1.500 10L11 12L13.500 20.500Z" fill="#e3ebf3" stroke="#9a9a9a" stroke-width="1.300" stroke-linejoin="round"/></svg>
<!-- ruler pencil -->
<svg style="left:1664px;top:972px" width="21" height="22"><rect x="1" y="2" width="8.500" height="18.500" fill="#c9c9c9" stroke="#8a8a8a" stroke-width="1.200"/><path d="M5 5H9.500M5 8H9.500M5 11H9.500M5 14H9.500M5 17H9.500" stroke="#8a8a8a" stroke-width="0.900"/><path d="M13.500 4a2 2 0 0 1 4.500 0V16.500L15.700 20.500L13.500 16.500Z" fill="#b9d0e6" stroke="#8a8a8a" stroke-width="1.200"/><path d="M13.500 6.500H18" stroke="#8a8a8a" stroke-width="1"/></svg>
<div class="a" style="left:1711.500px;top:983.500px;width:7.500px;height:2px;background:#555"></div>
<div class="t st" style="letter-spacing:-0.291px;left:1738.500px;top:975.300px">100 %</div>
<div class="a" style="left:1799.500px;top:983.500px;width:9.500px;height:1.800px;background:#555"></div><div class="a" style="left:1803.400px;top:979.600px;width:1.800px;height:9.500px;background:#555"></div>
<!-- bottom row -->
<div class="a" style="left:0;top:1000px;width:1820px;height:24px;background:#f0f0f0"></div>
<div class="t" style="letter-spacing:0.155px;left:0.500px;top:1006.500px;font-size:11px;color:#555">Online-Betrieb</div>
<div class="a" style="left:1682px;top:1005px;width:1px;height:19px;background:#c6c6c6"></div>
<svg style="left:1688.500px;top:1007px" width="17" height="14"><rect x="0.700" y="0.700" width="15" height="12" fill="#fff" stroke="#8a8a8a" stroke-width="1.200"/><path d="M0.700 4H15.700M0.700 8H15.700M8.200 8V12.700" stroke="#8a8a8a" stroke-width="1.100"/></svg>
<div class="a" style="left:1712.500px;top:1003px;width:20.500px;height:21px;background:#4a82b8"></div>
<svg style="left:1715px;top:1006px" width="16" height="16"><path d="M3 11.500C4.500 10 4 5.500 5.500 4A3.300 3.300 0 0 1 10.500 4C12 5.500 11.500 10 13 11.500Z" fill="#f2f2f2"/><circle cx="8" cy="13.300" r="1" fill="#dfe7f0"/></svg>
<div class="a" style="left:1745.500px;top:1015.500px;width:6px;height:1.500px;background:#666"></div>
<div class="t" style="letter-spacing:-0.522px;left:1764.500px;top:1006.500px;font-size:11.500px;color:#555">140 %</div>
<div class="a" style="left:1808.500px;top:1015.300px;width:7px;height:1.400px;background:#666"></div><div class="a" style="left:1811.300px;top:1012.500px;width:1.400px;height:7px;background:#666"></div>
<!--STATUS-->
</body></html>
